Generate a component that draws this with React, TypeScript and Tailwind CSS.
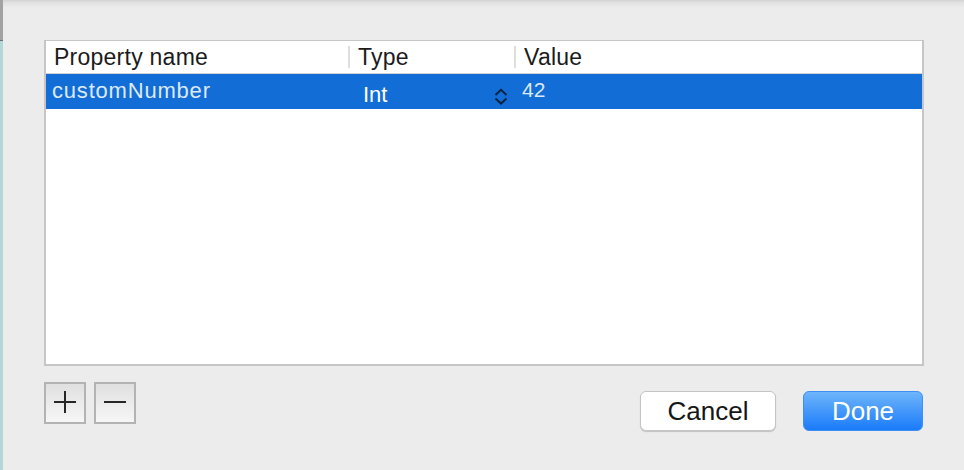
import React from "react";

const font = { fontFamily: '"Liberation Sans", Arial, sans-serif' };

function Chevrons() {
  return (
    <svg
      className="block h-[17px] w-[14px] shrink-0"
      width="14"
      height="17"
      viewBox="0 0 14 17"
      fill="none"
      stroke="#0d2440"
      strokeWidth="2"
      strokeLinecap="butt"
      strokeLinejoin="miter"
    >
      <polyline points="1.5,7 7,1.8 12.5,7" />
      <polyline points="1.5,10.4 7,15.6 12.5,10.4" />
    </svg>
  );
}

export default function App() {
  return (
    <div
      className="flex w-[964px] h-[470px] overflow-hidden bg-[#ececed] text-[#1b1b1b]"
      style={font}
    >
      <div className="flex w-[3px] flex-col shrink-0">
        <div className="h-[40px] bg-[#a2a2a2]" />
        <div className="h-[1px] bg-[#6f6f6f]" />
        <div className="flex-1 bg-[#b3d8da]" />
      </div>
      <div className="flex flex-1 flex-col bg-[linear-gradient(to_bottom,#d3d3d3_0px,#e3e3e4_3px,#ececed_8px)] pl-[41px] pt-[40px]">
        <div className="flex h-[326px] w-[880px] flex-col border-x-2 border-b-2 border-t border-[#c6c6c6] bg-white">
          <div className="flex h-[33px] border-b border-[#d2d2d2] text-[23px] leading-[26px] tracking-[0.25px] text-[#1b1b1b]">
            <div className="w-[302px] pl-[8px] pt-[3px]">Property name</div>
            <div className="mt-[5px] h-[22px] w-[2px] bg-[#dedede]" />
            <div className="w-[164px] pl-[8px] pt-[3px]">Type</div>
            <div className="mt-[5px] h-[22px] w-[2px] bg-[#dedede]" />
            <div className="flex-1 pl-[8px] pt-[3px]">Value</div>
          </div>
          <div className="flex h-[35px] bg-[#126dd6]">
            <div className="w-[302px] pl-[6px] pt-[4px] text-[22px] leading-[26px] tracking-[0.8px] text-[#dde9f8]">
              customNumber
            </div>
            <div className="w-[2px]" />
            <div className="flex w-[164px] items-start">
              <div className="pl-[13px] pt-[8px] text-[22px] leading-[26px] text-white">Int</div>
              <div className="ml-auto mr-[6px] mt-[14px] shrink-0">
                <Chevrons />
              </div>
            </div>
            <div className="w-[2px]" />
            <div className="flex-1 pl-[6px] pt-[3px] text-[21px] leading-[26px] text-[#dde9f8]">42</div>
          </div>
        </div>
        <div className="mt-[16px] flex w-[879px] items-start justify-between">
          <div className="flex gap-[8px]">
            <div className="flex h-[42px] w-[42px] items-center justify-center border-2 border-[#b3b3b3] bg-[linear-gradient(to_bottom,#e0e0e0,#f6f6f6)] pb-[3px]">
              <svg width="22" height="22" viewBox="0 0 22 22">
                <rect x="0" y="10" width="22" height="2" fill="#262626" />
                <rect x="10" y="0" width="2" height="22" fill="#262626" />
              </svg>
            </div>
            <div className="flex h-[42px] w-[42px] items-center justify-center border-2 border-[#b3b3b3] bg-[linear-gradient(to_bottom,#e0e0e0,#f6f6f6)] pb-[3px]">
              <svg width="22" height="22" viewBox="0 0 22 22">
                <rect x="0" y="10" width="22" height="2" fill="#262626" />
              </svg>
            </div>
          </div>
          <div className="mt-[9px] flex gap-[27px]">
            <button
              className="flex h-[40px] w-[136px] items-center justify-center rounded-[6px] border border-[#c4c4c4] bg-white text-[26px] leading-none text-[#161616] shadow-[0_1px_1px_rgba(0,0,0,0.18)]"
              style={font}
            >
              Cancel
            </button>
            <button
              className="flex h-[40px] w-[120px] items-center justify-center rounded-[6px] border border-[#3d8ef5] bg-[linear-gradient(to_bottom,#6eb5fb,#1a7bf9)] text-[26px] leading-none text-white"
              style={font}
            >
              Done
            </button>
          </div>
        </div>
      </div>
    </div>
  );
}
